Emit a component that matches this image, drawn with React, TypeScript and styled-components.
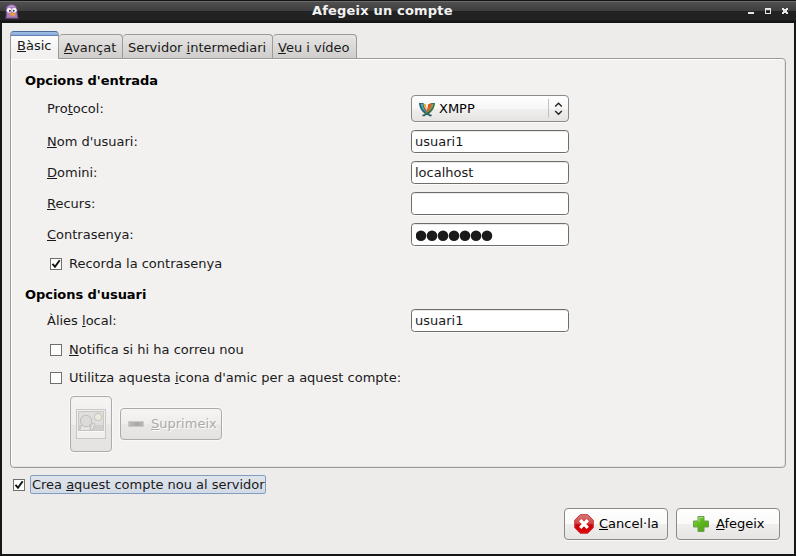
import React from "react";
import styled, { createGlobalStyle } from "styled-components";

const GlobalStyle = createGlobalStyle`
  * { box-sizing: border-box; }
  body { margin: 0; background: #111; }
  u {
    text-decoration: underline;
    text-decoration-thickness: 1px;
    text-underline-offset: 1px;
    text-decoration-skip-ink: none;
  }
`;

const Window = styled.div`
  width: 796px;
  height: 556px;
  display: flex;
  flex-direction: column;
  background: #161616;
  color: #1a1a1a;
  font: 13px/16px "DejaVu Sans", sans-serif;
  overflow: hidden;
  white-space: nowrap;
`;

const TitleBar = styled.header`
  height: 23px;
  flex: none;
  display: grid;
  grid-template-columns: 307px 1fr auto;
  align-items: center;
  padding: 0 6px 2px 5px;
  border-top: 1px solid #161616;
  background: linear-gradient(#6a6a6a 0 1px, #505050 1px, #3d3d3d 10px, #222 10px, #222 19px, #141414 20px);
`;

const Title = styled.h1`
  margin: 0 0 1px;
  font-size: 13px;
  line-height: 16px;
  letter-spacing: 0.18px;
  color: #f2f2f2;
`;

const WindowControls = styled.div`
  display: flex;
  height: 16px;
`;

const Body = styled.main`
  flex: none;
  height: 531px;
  margin: 0 2px 2px;
  padding: 8px 8px 0;
  background: #edeceb;
`;

const Tabs = styled.nav`
  display: flex;
  align-items: flex-end;
  height: 28px;
  margin-bottom: -1px;
`;

const Tab = styled.div<{ $width: number; $active?: boolean }>`
  width: ${(p) => p.$width}px;
  height: ${(p) => (p.$active ? 28 : 25)}px;
  padding: ${(p) => (p.$active ? "6px 0 0 6px" : "5px 0 0 5px")};
  position: relative;
  border: 1px solid #9c9a98;
  border-left-width: ${(p) => (p.$active ? 1 : 0)}px;
  border-radius: 4px 4px 0 0;
  background: linear-gradient(#e6e5e4, #d0cecc);
  ${(p) =>
    p.$active &&
    `border-top-color: #4a6d9c;
     border-bottom: 0;
     background: linear-gradient(#a3c0e6, #86abd9 3px, #5f83b4 3px, #5f83b4 4px, #fdfdfd 4px, #f2f1f0 20px);
     z-index: 1;`}
`;

const Panel = styled.section`
  width: 776px;
  height: 410px;
  padding: 14px 14px 0;
  border: 1px solid #9c9a98;
  border-radius: 0 4px 4px 4px;
  background: #f2f1f0;
  box-shadow: inset 0 1px #fff, inset 1px 0 #fff, inset -1px 0 #e3e2e1, inset 0 -1px #e3e2e1;
`;

const Heading = styled.h2`
  margin: 0;
  font-size: 13px;
  line-height: 16px;
  letter-spacing: -0.05px;
  color: #000;
`;

const Field = styled.label<{ $height?: number; $gap?: number }>`
  display: grid;
  grid-template-columns: 364px 158px;
  align-items: center;
  height: ${(p) => p.$height ?? 23}px;
  margin: ${(p) => p.$gap ?? 8}px 0 0 22px;
`;

const Input = styled.input`
  width: 158px;
  height: 23px;
  padding: 0 3px;
  border: 1px solid #6f6d6a;
  border-radius: 3.5px;
  outline: 0;
  background: #fff;
  box-shadow: inset 0 1px #e9e8e7, 0 1px #fafafa;
  color: #1a1a1a;
  font: inherit;
`;

const PasswordBox = styled(Input).attrs({ as: "div" })`
  display: flex;
  align-items: center;
  padding-left: 4px;
`;

const Combo = styled.div`
  height: 27px;
  display: flex;
  align-items: center;
  padding-left: 6px;
  border: 1px solid #8c8a88;
  border-radius: 4px;
  background: linear-gradient(#fff, #f8f7f7 50%, #f0efee 52%, #e5e4e3);
  box-shadow: 0 1px #fafafa;
`;

const ComboText = styled.span`
  width: 109px;
  margin-left: 3px;
  color: #000;
`;

const ComboArrows = styled.span`
  display: flex;
  height: 19px;
  padding-left: 4px;
  border-left: 1px solid #c3c1bf;
`;

const CheckRow = styled.label<{ $top: number; $left?: number }>`
  display: flex;
  align-items: center;
  height: 16px;
  margin: ${(p) => p.$top}px 0 0 ${(p) => p.$left ?? 25}px;
`;

const Box = styled.span`
  width: 12px;
  height: 12px;
  display: flex;
  margin-right: 7px;
  border: 1px solid #72706d;
  background: #fff;
  svg { flex: none; margin: -1px; }
`;

const FocusText = styled.span`
  height: 19px;
  width: 236px;
  margin: -1px 0 0 -2px;
  padding-left: 1px;
  line-height: 17px;
  border: 1px solid #829dbf;
  border-radius: 2px;
  background: linear-gradient(#dfe4eb, #d2dbe6);
  letter-spacing: -0.02px;
`;

const IconActions = styled.div`
  display: flex;
  align-items: center;
  gap: 8px;
  margin: 10px 0 0 45px;
`;

const Button = styled.button<{ $width: number; $height?: number; $pad: number; $gap?: number }>`
  width: ${(p) => p.$width}px;
  height: ${(p) => p.$height ?? 32}px;
  display: flex;
  align-items: center;
  gap: ${(p) => p.$gap ?? 5}px;
  padding: 0 0 0 ${(p) => p.$pad}px;
  border: 1px solid #8c8a88;
  border-radius: 4px;
  background: linear-gradient(#fff, #f9f9f8 50%, #efeeed 52%, #e6e5e4);
  box-shadow: 0 1px #f8f8f8;
  color: #000;
  font: inherit;
  svg { flex: none; }
  &:disabled {
    border-color: #adaba9;
    background: linear-gradient(#f5f4f3, #efeeed 50%, #e8e7e6 52%, #e4e3e2);
    box-shadow: 0 0 0 1px #f8f8f7;
    color: #acaaa7;
    text-shadow: 1px 1px #fff;
  }
`;

const Footer = styled.footer`
  display: flex;
  justify-content: flex-end;
  gap: 8px;
  margin: 15px 6px 0 0;
`;

const Check = () => (
  <svg width="12" height="12" viewBox="0 0 12 12">
    <path d="M2.5 5.8 5 8.8 9.7 2.3" fill="none" stroke="#111" strokeWidth="1.9" />
  </svg>
);

const PidginIcon = () => (
  <svg width="14" height="15" viewBox="0 0 14 15">
    <path d="M.8 14.2C1.8 11 1 9 1 5.5 1 2 3.3.6 6.7.6S12 2.5 12 6c0 3 .3 6 1.2 8.2z" fill="#a583b8" stroke="#6d4582" />
    <path d="M3 3.2Q6 .8 10 2.6" fill="none" stroke="#c6a5d5" />
    <circle cx="4.2" cy="6.3" r="2.4" fill="#fff" />
    <circle cx="9.3" cy="6.3" r="2.4" fill="#fff" />
    <circle cx="4.9" cy="6.8" r="1" fill="#3d2549" />
    <circle cx="8.7" cy="6.8" r="1" fill="#3d2549" />
    <path d="M4.2 9.8 7 8.6l3.8 1.4-2.6 2.4z" fill="#f59a2d" />
  </svg>
);

const Controls = () => (
  <svg width="44" height="16" viewBox="0 0 44 16" shapeRendering="crispEdges" fill="#e6e6e6">
    <path d="M2 9h6v2H2z" />
    <path d="M19 5h6v6h-6zm1 2v3h4V7z" fillRule="evenodd" />
    <path d="M36 5h2v1h2V5h2v2h-1v2h1v2h-2v-1h-2v1h-2V9h1V7h-1z" />
  </svg>
);

const XmppIcon = () => (
  <svg width="18" height="16" viewBox="0 0 18 16">
    <path d="M1 2h4.6C6 6.2 7.6 9.6 12 13.2L10.5 14.6C5 12.2 1.4 8 1 2z" fill="#205b7d" />
    <path d="M2.6 2.7h2.2C5.2 6.5 6.7 9.7 9.8 12.4 5.6 10.2 3 7 2.6 2.7z" fill="#54a6a4" />
    <path d="M5.4 2.5 8 3.2c0 2.8.8 5.5 2.3 8.2C7.5 9.2 5.8 6.2 5.4 2.5z" fill="#e4ad3e" />
    <path d="M17 2h-4.4C12.2 6.2 10.4 9.6 6 13.2l1.5 1.4C13 12.2 16.6 8 17 2z" fill="#2f6e48" />
    <path d="M15.5 2.7h-3.3c-.4 3.8-2 7-5.4 9.9 5-2 8.2-5.4 8.7-9.9z" fill="#7ca64f" />
    <path d="m13.7 2.2-3.7 1c0 3.3-1 6.2-2.6 8.8 4-2.1 6-5.4 6.3-9.8z" fill="#e5562a" />
    <path d="M4.5 13.4h3.2l-1 1.8H4.4zM10.3 13.4h3.2l.2 1.8h-2.5z" fill="#27566b" />
  </svg>
);

const Arrows = () => (
  <svg width="12" height="19" viewBox="0 0 12 19">
    <path d="m2.2 7.6 3.3-3.3 3.3 3.3m-6.6 4.3 3.3 3.3 3.3-3.3" fill="none" stroke="#222" strokeWidth="1.4" />
  </svg>
);

const PhotoIcon = () => (
  <svg width="30" height="30" viewBox="0 0 30 30">
    <rect x=".5" y=".5" width="29" height="29" fill="#f0efee" stroke="#c8c7c5" />
    <path d="M2.5 2.5h25v19h-25z" fill="#dfdedd" stroke="#c8c7c5" />
    <path d="M3 16h24v5H3z" fill="#cfcecc" />
    <circle cx="22" cy="8" r="3.7" fill="#eae9df" stroke="#c6c5bc" />
    <path d="M4 21.5c0-4 2-6 5.5-6s5 2 5.5 6zM14 19l3-5 2 1-3 6.5h-2z" fill="#e6e5e4" stroke="#c3c2c0" />
    <circle cx="10" cy="12" r="5.7" fill="#dcdbd9" stroke="#bfbebc" />
    <path d="M2.5 22.5h25" stroke="#fafafa" />
  </svg>
);

const MinusIcon = () => (
  <svg width="16" height="16" viewBox="0 0 16 16">
    <defs>
      <linearGradient id="minus"><stop stopColor="#bdbcbb" /><stop offset=".6" stopColor="#a9a8a6" /><stop offset="1" stopColor="#b8b7b6" /></linearGradient>
    </defs>
    <path d="M.5 5.5h15v5H.5z" fill="url(#minus)" stroke="#cac9c7" />
  </svg>
);

const CancelIcon = () => (
  <svg width="20" height="20" viewBox="0 0 20 20">
    <defs>
      <linearGradient id="stop" x2="0" y2="1"><stop stopColor="#d77b7b" /><stop offset=".52" stopColor="#d13b3e" /><stop offset=".53" stopColor="#c90009" /><stop offset="1" stopColor="#e20808" /></linearGradient>
    </defs>
    <path d="M6.2.7h7.6l5.5 5.5v7.6l-5.5 5.5H6.2L.7 13.8V6.2z" fill="url(#stop)" stroke="#c8383c" />
    <path d="m6.2 6.2 7.6 7.6m0-7.6-7.6 7.6" stroke="#fff" strokeWidth="3.3" />
  </svg>
);

const AddIcon = () => (
  <svg width="16" height="16" viewBox="0 0 16 16">
    <defs>
      <linearGradient id="add" x2="1" y2="1"><stop stopColor="#8bd64b" /><stop offset=".5" stopColor="#59b51a" /><stop offset="1" stopColor="#48a40a" /></linearGradient>
    </defs>
    <path d="M5 .5h6V5h4.500v6H11v4.500H5V11H.5V5H5z" fill="url(#add)" stroke="#6a9f50" strokeLinejoin="round" />
    <path d="M6 6V1.500h4" fill="none" stroke="#a3de76" />
  </svg>
);

const PasswordDots = () => (
  <svg width="78" height="14" viewBox="0 0 78 14">
    {[0, 1, 2, 3, 4, 5, 6].map((i) => (
      <circle key={i} cx={5 + i * 11} cy="7.8" r="5.3" fill="#1a1a1a" />
    ))}
  </svg>
);

export default function App() {
  return (
    <Window>
      <GlobalStyle />
      <TitleBar>
        <PidginIcon />
        <Title>Afegeix un compte</Title>
        <WindowControls><Controls /></WindowControls>
      </TitleBar>
      <Body>
        <Tabs>
          <Tab $width={49} $active><u>B</u>àsic</Tab>
          <Tab $width={64}><u>A</u>vançat</Tab>
          <Tab $width={150}>Servidor <u>i</u>ntermediari</Tab>
          <Tab $width={84}><u>V</u>eu i vídeo</Tab>
        </Tabs>
        <Panel>
          <Heading>Opcions d'entrada</Heading>
          <Field as="div" $height={27} $gap={6}>
            <span>Pro<u>t</u>ocol:</span>
            <Combo><XmppIcon /><ComboText>XMPP</ComboText><ComboArrows><Arrows /></ComboArrows></Combo>
          </Field>
          <Field><span><u>N</u>om d'usuari:</span><Input defaultValue="usuari1" /></Field>
          <Field><span><u>D</u>omini:</span><Input defaultValue="localhost" /></Field>
          <Field><span><u>R</u>ecurs:</span><Input /></Field>
          <Field as="div"><span><u>C</u>ontrasenya:</span><PasswordBox><PasswordDots /></PasswordBox></Field>
          <CheckRow $top={10}><Box><Check /></Box>Recorda la contrasenya</CheckRow>
          <CheckRow as="div" $top={15} $left={0}><Heading>Opcions d'usuari</Heading></CheckRow>
          <Field $gap={6}><span>Àlies <u>l</u>ocal:</span><Input defaultValue="usuari1" /></Field>
          <CheckRow $top={10}><Box /><span><u>N</u>otifica si hi ha correu nou</span></CheckRow>
          <CheckRow $top={12}><Box /><span>Utilitza aquesta <u>i</u>cona d'amic per a aquest compte:</span></CheckRow>
          <IconActions>
            <Button disabled $width={42} $height={56} $pad={5}><PhotoIcon /></Button>
            <Button disabled $width={102} $pad={7} $gap={7}><MinusIcon /><span><u>S</u>uprimeix</span></Button>
          </IconActions>
        </Panel>
        <CheckRow $top={9} $left={3}><Box><Check /></Box><FocusText>Crea <u>a</u>quest compte nou al servidor</FocusText></CheckRow>
        <Footer>
          <Button $width={104} $pad={9}><CancelIcon /><span><u>C</u>ancel·la</span></Button>
          <Button $width={104} $pad={16} $gap={7}><AddIcon /><span><u>A</u>fegeix</span></Button>
        </Footer>
      </Body>
    </Window>
  );
}
